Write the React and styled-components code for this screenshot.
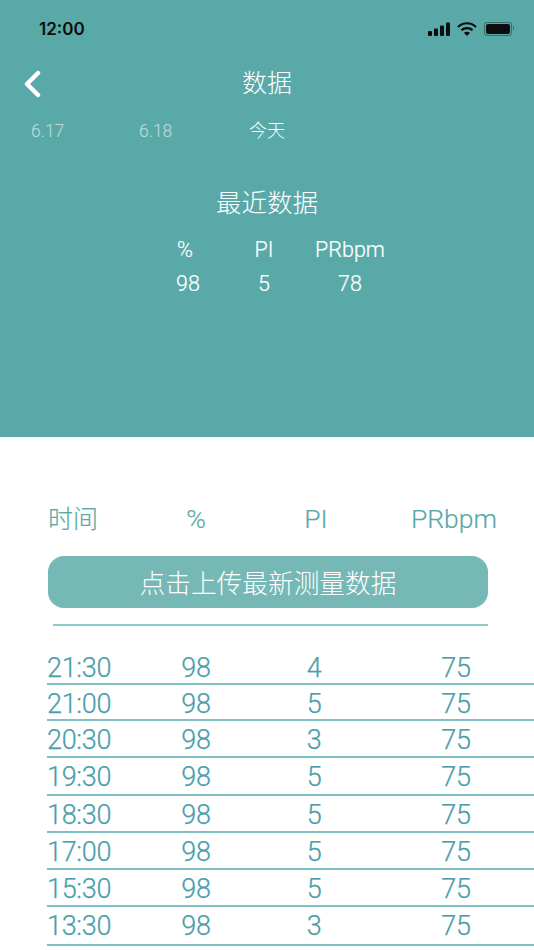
import React from "react";
import styled, { createGlobalStyle } from "styled-components";

const records = [
  { time: "21:30", spo2: 98, pi: 4, pr: 75, height: 36 },
  { time: "21:00", spo2: 98, pi: 5, pr: 75, height: 36 },
  { time: "20:30", spo2: 98, pi: 3, pr: 75, height: 37 },
  { time: "19:30", spo2: 98, pi: 5, pr: 75, height: 38 },
  { time: "18:30", spo2: 98, pi: 5, pr: 75, height: 37 },
  { time: "17:00", spo2: 98, pi: 5, pr: 75, height: 37 },
  { time: "15:30", spo2: 98, pi: 5, pr: 75, height: 37 },
  { time: "13:30", spo2: 98, pi: 3, pr: 75, height: 39 },
];

const App = () => {
  return (
    <Page>
      <GlobalStyle />
      <Header>
        <StatusBar>
          <Clock>12:00</Clock>
          <StatusIcons>
            <svg width="22" height="14" viewBox="0 0 22 14" fill="#0d0d0d">
              <rect x="0" y="9" width="4" height="5" rx="1" />
              <rect x="6" y="6.5" width="4" height="7.5" rx="1" />
              <rect x="12" y="3.5" width="4" height="10.5" rx="1" />
              <rect x="18" y="0.5" width="4" height="13.5" rx="1" />
            </svg>
            <svg width="20" height="14" viewBox="0 0 20 14" fill="none" stroke="#0d0d0d" strokeWidth="2.2">
              <path d="M1 5 C6 0 14 0 19 5" />
              <path d="M4.4 8.2 C7.5 5.4 12.5 5.4 15.6 8.2" />
              <path d="M10 14 L6.9 10.8 C8.7 9.4 11.3 9.4 13.1 10.8 Z" fill="#0d0d0d" stroke="none" />
            </svg>
            <Battery>
              <BatteryFill />
            </Battery>
          </StatusIcons>
        </StatusBar>
        <NavBar>
          <BackButton>
            <svg width="18" height="28" viewBox="0 0 18 28" fill="none" stroke="#fff" strokeWidth="4.4" strokeLinecap="round" strokeLinejoin="round">
              <path d="M15 3 L4 14 L15 25" />
            </svg>
          </BackButton>
          <NavTitle>数据</NavTitle>
        </NavBar>
        <DateTabs>
          <DateTab>6.17</DateTab>
          <DateTab>6.18</DateTab>
          <DateTab $active>今天</DateTab>
        </DateTabs>
        <LatestTitle>最近数据</LatestTitle>
        <LatestGrid>
          <span>%</span>
          <span>PI</span>
          <span>PRbpm</span>
          <span>98</span>
          <span>5</span>
          <span>78</span>
        </LatestGrid>
      </Header>
      <Content>
        <TableHead>
          <HeadCell $first>时间</HeadCell>
          <HeadCell>%</HeadCell>
          <HeadCell>PI</HeadCell>
          <HeadCell>PRbpm</HeadCell>
        </TableHead>
        <UploadButton>点击上传最新测量数据</UploadButton>
        <Divider />
        <Rows>
          {records.map((r) => (
            <Row key={r.time} style={{ height: r.height }}>
              <span>{r.time}</span>
              <span>{r.spo2}</span>
              <span>{r.pi}</span>
              <span>{r.pr}</span>
            </Row>
          ))}
        </Rows>
      </Content>
    </Page>
  );
};

export default App;

const GlobalStyle = createGlobalStyle`
  html, body {
    margin: 0;
    padding: 0;
    background: #fff;
  }
  body {
    font-family: "Roboto", "Noto Sans CJK SC", sans-serif;
  }
`;

const Page = styled.div`
  width: 534px;
  height: 950px;
  overflow: hidden;
  background: #fff;
`;

const Header = styled.header`
  height: 437px;
  background: #5aa9a9;
  color: #fff;
`;

const StatusBar = styled.div`
  height: 58px;
  padding: 0 20px 0 39px;
  display: flex;
  align-items: center;
  justify-content: space-between;
`;

const Clock = styled.div`
  font-family: "Inter", sans-serif;
  font-size: 17px;
  font-weight: 600;
  color: #0d0d0d;
`;

const StatusIcons = styled.div`
  display: flex;
  align-items: center;
  gap: 7px;
`;

const Battery = styled.div`
  position: relative;
  width: 24px;
  height: 10px;
  border: 1px solid rgba(13, 13, 13, 0.4);
  border-radius: 3px;
  padding: 1px;
  margin-right: 2px;

  &::after {
    content: "";
    position: absolute;
    right: -3px;
    top: 3px;
    width: 1.5px;
    height: 4px;
    border-radius: 0 1px 1px 0;
    background: rgba(13, 13, 13, 0.4);
  }
`;

const BatteryFill = styled.div`
  height: 100%;
  background: #0d0d0d;
  border-radius: 2px;
`;

const NavBar = styled.div`
  position: relative;
  height: 46px;
  display: flex;
  align-items: center;
  justify-content: center;
`;

const BackButton = styled.div`
  position: absolute;
  left: 23px;
  top: 12px;
  display: flex;
`;

const NavTitle = styled.div`
  font-size: 25px;
  font-weight: 300;
`;

const DateTabs = styled.div`
  display: grid;
  grid-template-columns: 108px 110px 1fr;
  padding: 15px 0 0 31px;
`;

const DateTab = styled.div`
  font-size: ${(p) => (p.$active ? "18px" : "17.5px")};
  font-weight: 300;
  opacity: ${(p) => (p.$active ? 1 : 0.6)};
  line-height: 24px;
`;

const LatestTitle = styled.div`
  margin-top: 42px;
  text-align: center;
  font-size: 25.5px;
  font-weight: 300;
  line-height: 36px;
`;

const LatestGrid = styled.div`
  margin: 12px 0 0 145px;
  display: grid;
  grid-template-columns: 86px 66px 106px;
  grid-auto-rows: 34px;
  font-size: 21.5px;
  font-weight: 300;
  -webkit-text-stroke: 0.2px #fff;
  line-height: 34px;
  text-align: center;

  span:first-child {
    padding-right: 6px;
  }
`;

const Content = styled.main`
  padding-top: 62px;
`;

const TableHead = styled.div`
  display: grid;
  grid-template-columns: 90px 116px 124px 152px;
  padding-left: 48px;
  height: 57px;
  font-size: 26.5px;
  font-weight: 300;
  color: #5aa9a9;
  -webkit-text-stroke: 0.2px #5aa9a9;
  line-height: 39px;
`;

const HeadCell = styled.div`
  text-align: ${(p) => (p.$first ? "left" : "center")};
  font-size: ${(p) => (p.$first ? "25px" : "inherit")};
  line-height: ${(p) => (p.$first ? "41px" : "inherit")};
`;

const UploadButton = styled.button`
  display: block;
  width: 440px;
  height: 52px;
  margin-left: 48px;
  padding: 0 0 2px;
  border: 0;
  border-radius: 16px;
  background: #76b8b6;
  color: #fff;
  font-family: inherit;
  font-size: 25.7px;
  font-weight: 300;
`;

const Divider = styled.div`
  height: 2px;
  width: 435px;
  margin: 16px 0 0 53px;
  background: #8ccacb;
`;

const Rows = styled.div`
  margin-top: 23px;
  margin-left: 47px;
`;

const Row = styled.div`
  display: grid;
  grid-template-columns: 91px 116px 120px 160px;
  box-sizing: border-box;
  border-bottom: 2px solid #7fc1c3;
  font-size: 27px;
  font-weight: 300;
  letter-spacing: -0.3px;
  color: #4a9eab;
  -webkit-text-stroke: 0.25px #4a9eab;
  line-height: 38px;
  text-align: center;

  span:first-child {
    text-align: left;
  }
  span:last-child {
    padding-left: 4px;
  }
`;
